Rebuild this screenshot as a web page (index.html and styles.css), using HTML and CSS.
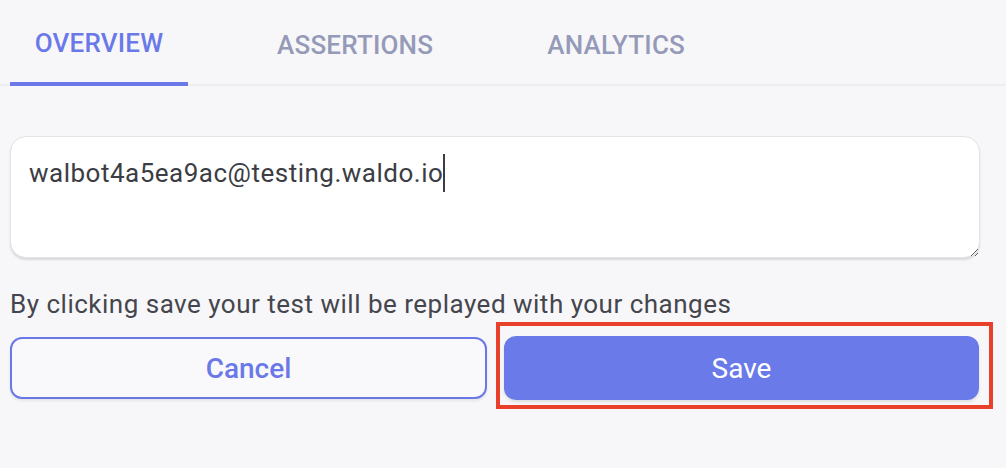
FILE: index.html
```html
<!DOCTYPE html>
<html>
<head>
<meta charset="utf-8">
<link rel="stylesheet" href="styles.css">
</head>
<body>
<div class="page">
  <nav class="tabs">
    <div class="tab active">OVERVIEW</div>
    <div class="tab">ASSERTIONS</div>
    <div class="tab">ANALYTICS</div>
  </nav>
  <div class="content">
    <div class="field"><span class="value">walbot4a5ea9ac@testing.waldo.io</span><span class="caret"></span></div>
    <p class="hint">By clicking save your test will be replayed with your changes</p>
    <div class="actions">
      <button class="btn btn-outline">Cancel</button>
      <div class="highlight">
        <button class="btn btn-primary">Save</button>
      </div>
    </div>
  </div>
</div>
</body>
</html>
```
FILE: styles.css
```css
* { box-sizing: border-box; }
html, body { margin: 0; padding: 0; }
body {
  background: #f7f7f9;
  font-family: Roboto, "Liberation Sans", sans-serif;
  width: 1006px;
  height: 468px;
  overflow: hidden;
}
.page { padding: 0 0 0 10px; }
.tabs {
  display: flex;
  gap: 64px;
  height: 86px;
  border-bottom: 2px solid #eeeef2;
  margin-left: -10px;
  padding-left: 10px;
}
.tab {
  font-size: 26px;
  font-weight: 500;
  letter-spacing: 0.2px;
  color: #959ab8;
  height: 86px;
  display: flex;
  align-items: center;
  justify-content: center;
  padding: 4px 25px 0;
}
.tab:nth-child(1) { width: 178px; padding: 4px 0 0; }
.tab.active {
  color: #6b79e8;
  border-bottom: 4px solid #6b79e8;
  margin-bottom: -2px;
}
.content { padding-top: 50px; width: 970px; }
.field {
  height: 122px;
  background: #fff;
  border: 1px solid #e3e3e8;
  border-radius: 16px;
  box-shadow: 0 2px 2px rgba(0,0,0,0.12);
  padding: 19px 18px;
  font-size: 26px;
  letter-spacing: 0.5px;
  color: #3c3d44;
  resize: vertical;
  overflow: auto;
  display: flex;
  align-items: flex-start;
}
.value { line-height: 34px; }
.caret {
  display: inline-block;
  width: 2px;
  height: 38px;
  background: #3c3d44;
  margin-top: -2px;
}
.hint {
  margin: 31px 0 0;
  font-size: 26px;
  letter-spacing: 0.5px;
  color: #45464d;
  line-height: 30px;
}
.actions {
  display: flex;
  gap: 9px;
  margin-top: 3px;
  width: 983px;
}
.btn {
  font-family: inherit;
  font-size: 28px;
  font-weight: 500;
  border-radius: 12px;
  cursor: pointer;
  flex-shrink: 0;
}
.btn-outline {
  width: 477px;
  height: 62px;
  margin-top: 15px;
  background: #f9f9fb;
  border: 2px solid #6b79e8;
  color: #6b79e8;
  box-shadow: 0 2px 3px rgba(0,0,0,0.08);
}
.highlight {
  flex-shrink: 0;
  border: 4px solid #e8402a;
  padding: 10px 10px 5px 4px;
  width: 497px;
  height: 87px;
}
.btn-primary {
  width: 475px;
  height: 64px;
  background: #6b7ae9;
  color: #fff;
  border: none;
  font-weight: 400;
  box-shadow: 0 2px 3px rgba(0,0,0,0.1);
}
```
